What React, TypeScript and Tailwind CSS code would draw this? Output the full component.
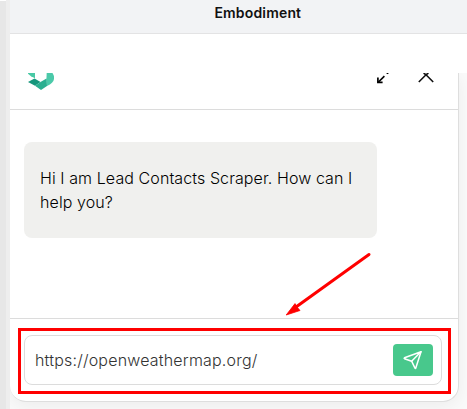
function Logo() {
  return (
    <svg width="28" height="18" viewBox="0 0 28 18">
      <path d="M0 0H7V5.3L3 3.2L0 .8Z" fill="#49c9a5" />
      <path d="M18.7 0H24.5Q26.2 2 26 6Q25.5 10 19 13L18.4 7Z" fill="#4bc9a9" />
      <path d="M0 9L6.5 5.4L12.5 9L7 12.8Z" fill="#16967c" />
      <path d="M7 12.8L12.5 9L18.5 5.5L19 13L13 17Z" fill="#2baf90" />
    </svg>
  );
}

function ResizeIcon() {
  return (
    <svg width="14" height="12" viewBox="0 0 14 12" fill="none" stroke="#000">
      <path d="M2 9.5L8.4 3.1" strokeWidth="1.6" />
      <path d="M1.9 4.6V9.3H6.6" strokeWidth="1.7" />
      <path d="M10.6 .5H12.4" strokeWidth="1.1" />
    </svg>
  );
}

function CloseIcon() {
  return (
    <svg width="18" height="12" viewBox="0 0 18 12" fill="none" stroke="#111" strokeWidth="1.6">
      <path d="M1.8 9L9 1.8L16.2 9M9 1.8L6.6 0M9 1.8L11.4 0" />
    </svg>
  );
}

function SendIcon() {
  return (
    <svg width="20" height="20" viewBox="0 0 20 20" fill="none" stroke="#fff" strokeWidth="1.5" strokeLinejoin="round" strokeLinecap="round">
      <path d="M18 1.8L1.5 7.8Q.8 8.2 1.5 8.7L8.6 11.2L12 18.2Q12.4 18.8 12.8 18.1Z" />
      <path d="M8.6 11.2L18 1.8" />
    </svg>
  );
}

export default function App() {
  return (
    <div className="relative flex h-[409px] w-[467px] overflow-hidden bg-white font-['Inter',sans-serif]">
      <div className="w-1.5 shrink-0 border-t border-white bg-[#e7e7e7]" />
      <div className="w-1 shrink-0 bg-[#eeeeee]" />
      <div className="flex min-w-0 flex-1 flex-col">
        <header className="h-[34px] shrink-0 border-b border-[#e3e3e4] bg-[#f2f3f5] pl-[204.4px] pt-[3px]">
          <h1 className="text-[14px] font-semibold leading-5 tracking-[0.17px] text-[#111111]">Embodiment</h1>
        </header>
        <div className="h-[39px] shrink-0 bg-white" />
        <div className="min-h-0 flex-1 overflow-hidden bg-[#fafafa]">
          <main className="flex h-[329px] w-[449px] flex-col rounded-b-[16px] border-b border-r border-[#dedede] bg-white shadow-[0_4px_18px_rgba(0,0,0,0.06)]">
            <div className="flex h-[37px] shrink-0 items-start border-b border-[#dcdcdc] pl-[17.6px]">
              <Logo />
              <div className="ml-[320.4px]"><ResizeIcon /></div>
              <div className="ml-[27px]"><CloseIcon /></div>
            </div>
            <div className="flex-1 pl-3.5 pt-8">
              <p className="h-24 w-[353px] rounded-lg bg-[#f0f0ee] px-4 pt-6 text-base font-light leading-6 tracking-[0.09px] text-black">
                Hi I am Lead Contacts Scraper. How can I help you?
              </p>
            </div>
            <div className="flex h-[83px] shrink-0 items-start border-t border-[#dcdcdc] pl-2 pt-[9px]">
              <div className="h-[66px] w-[433px] border-[3px] border-[#ff0000] pl-[3px] pt-1">
                <div className="flex h-[50px] w-[418px] items-center justify-between rounded-lg border border-[#dcdcdc] pl-2.5 pr-2">
                  <span className="text-base font-light tracking-[0.19px] text-[#333333]">https://openweathermap.org/</span>
                  <button aria-label="Send" className="flex h-8 w-10 items-center justify-center rounded bg-[#48c88c]">
                    <SendIcon />
                  </button>
                </div>
              </div>
            </div>
          </main>
        </div>
      </div>
      <svg className="absolute left-[284px] top-[250px]" width="90" height="70" viewBox="0 0 90 70">
        <path d="M85 4.5L12 57" stroke="#ff0000" strokeWidth="3" strokeLinecap="round" />
        <path d="M2.2 65L11 53.6L13 57L16 60.5Z" fill="#ff0000" stroke="#ff0000" strokeWidth=".8" />
      </svg>
    </div>
  );
}
